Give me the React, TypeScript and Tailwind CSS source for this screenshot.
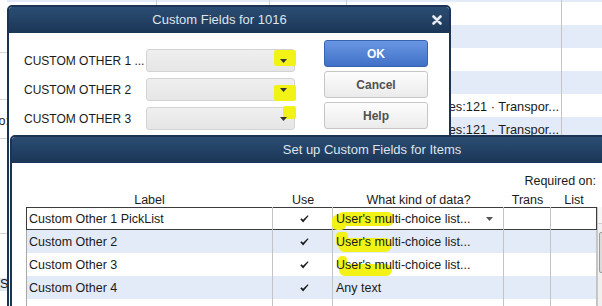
import React from "react";

const HL = "bg-[#f2f216]";

function Tri({ color = "#3a3a3a" }: { color?: string }) {
  return (
    <svg width="7" height="4" viewBox="0 0 7 4" className="relative z-10 block">
      <path d="M0 0H7L3.5 4Z" fill={color} />
    </svg>
  );
}

function Check() {
  return (
    <svg width="9" height="8" viewBox="0 0 9 8" className="block">
      <path d="M0.3 4.2 L1.6 3.2 L3 4.8 L7.8 0.3 L8.5 0.9 L3.1 7.6 Z" fill="#1a1a1a" />
    </svg>
  );
}

function CloseX() {
  return (
    <svg width="10" height="10" viewBox="0 0 10 10" className="block">
      <path d="M1.5 1.5 L8.5 8.5 M8.5 1.5 L1.5 8.5" stroke="#e6ebf1" strokeWidth="2.6" strokeLinecap="round" />
    </svg>
  );
}

const bgRows = [true, false, true, false, true, false, true, false];

function BackgroundList() {
  return (
    <div className="absolute left-0 top-[-21px] w-[602px] flex flex-col">
      {bgRows.map((blue, i) => (
        <div key={i} className={`flex h-[23px] ${blue ? "bg-[#e3ebf8]" : "bg-white"}`}>
          <div className="w-[157px] border-r border-[#cfcfcf]" />
          <div className="w-[113px] border-r border-[#cfcfcf]" />
          <div className="w-[77px] border-r border-[#cfcfcf]" />
          <div className="w-[215px] border-r border-[#c4c4c4] flex items-center justify-end pr-[2px] pt-[2px] text-[12.8px] text-[#1a1a1a] whitespace-nowrap overflow-hidden">
            {i === 5 || i === 6 ? "Expenses:121 · Transpor..." : ""}
          </div>
          <div className="flex-1" />
        </div>
      ))}
    </div>
  );
}

function LeftStrip() {
  return (
    <div className="absolute left-0 top-0 w-[7px] h-[306px] bg-white overflow-hidden text-[12.5px] text-[#1a1a1a]">
      <div className="absolute left-0 top-[52px] w-[7px] h-px bg-[#d4d4d4]" />
      <div className="absolute left-0 top-[99px] w-[7px] h-px bg-[#d4d4d4]" />
      <div className="absolute left-0 top-[138px] w-[7px] h-px bg-[#d4d4d4]" />
      <div className="absolute left-0 top-[233px] w-[7px] h-px bg-[#d4d4d4]" />
      <div className="absolute left-0 top-[278px] w-[7px] h-[13px] bg-[#e2e8f0]" />
      <div className="absolute right-[-2px] top-[114px] leading-[14px] whitespace-nowrap">o:</div>
      <div className="absolute left-0 top-[277px] leading-[14px] whitespace-nowrap">Se</div>
    </div>
  );
}

function Dropdown({ hl }: { hl: string }) {
  return (
    <div className="relative w-[149px] h-[23px] rounded-[3px] border border-[#d3d3d3] bg-gradient-to-b from-[#efefef] to-[#e6e6e6] flex items-center justify-end pr-[7px]">
      <div className={`absolute ${hl} ${HL} rounded-[2px]`} />
      <Tri color="#333" />
    </div>
  );
}

function CustomFieldsDialog() {
  const rows = [
    { label: "CUSTOM OTHER 1 ...", hl: "left-[127px] top-[0px] w-[22px] h-[16px]" },
    { label: "CUSTOM OTHER 2", hl: "left-[127px] top-[6px] w-[22px] h-[16px]" },
    { label: "CUSTOM OTHER 3", hl: "left-[136px] top-[-2px] w-[13px] h-[13px]" },
  ];
  return (
    <div className="absolute left-[7px] top-[5px] w-[444px] h-[330px] rounded-t-[5px] border-2 border-[#1b3453] bg-white overflow-hidden">
      <div className="relative h-[26px] bg-gradient-to-b from-[#2b4d73] to-[#1b3656] flex items-center">
        <div className="flex-1 text-center pr-[19px] text-[13px] leading-[16px] text-[#dde4ec]">Custom Fields for 1016</div>
        <div className="absolute right-[7px] top-[8px]">
          <CloseX />
        </div>
      </div>
      <div className="flex pl-[15px] pt-[7px]">
        <div className="flex flex-col gap-[6px] mt-[9px]">
          {rows.map((r) => (
            <div key={r.label} className="flex items-center h-[23px]">
              <div className="w-[122px] text-[12px] leading-[14px] text-[#1a1a1a] whitespace-nowrap">{r.label}</div>
              <Dropdown hl={r.hl} />
            </div>
          ))}
        </div>
        <div className="ml-[29px] flex flex-col gap-[4px] w-[104px]">
          <div className="h-[27px] rounded-[3px] border border-[#3763b3] bg-gradient-to-b from-[#6a97e2] to-[#4071c8] flex items-center justify-center text-[12px] font-bold text-white">
            OK
          </div>
          <div className="h-[27px] rounded-[3px] border border-[#c6c6c6] bg-gradient-to-b from-[#fdfdfd] to-[#ebebeb] flex items-center justify-center text-[12px] font-bold text-[#505050]">
            Cancel
          </div>
          <div className="h-[27px] rounded-[3px] border border-[#c6c6c6] bg-gradient-to-b from-[#fdfdfd] to-[#ebebeb] flex items-center justify-center text-[12px] font-bold text-[#505050]">
            Help
          </div>
        </div>
      </div>
    </div>
  );
}

type Row = { label: string; use: boolean; data: string; arrow?: boolean; hl?: React.ReactNode };

const tableRows: Row[] = [
  {
    label: "Custom Other 1 PickList",
    use: true,
    data: "User's multi-choice list...",
    arrow: true,
    hl: (
      <>
        <div className={`absolute left-[4px] top-[5px] w-[57px] h-[14px] rounded-[6px] ${HL}`} />
        <div className={`absolute left-[-1px] top-[8px] w-[14px] h-[15px] rounded-[5px] ${HL}`} />
      </>
    ),
  },
  {
    label: "Custom Other 2",
    use: true,
    data: "User's multi-choice list...",
    hl: (
      <>
        <div className={`absolute left-[3px] top-[2px] w-[12px] h-[14px] rounded-[4px] ${HL}`} />
        <div className={`absolute left-[5px] top-[8px] w-[54px] h-[14px] rounded-[7px] ${HL}`} />
      </>
    ),
  },
  {
    label: "Custom Other 3",
    use: true,
    data: "User's multi-choice list...",
    hl: (
      <>
        <div className={`absolute left-[5px] top-[3px] w-[9px] h-[12px] rounded-[4px] ${HL}`} />
        <div className={`absolute left-[6px] top-[11px] w-[53px] h-[12px] rounded-[6px] ${HL}`} />
      </>
    ),
  },
  { label: "Custom Other 4", use: true, data: "Any text" },
  { label: "Custom Other 5", use: false, data: "Any text" },
];

const cols = "grid grid-cols-[247px_60px_171px_47px_46px]";

function SetupDialog() {
  return (
    <div className="absolute left-[10px] top-[135px] w-[724px] h-[200px] rounded-tl-[5px] border-2 border-[#1b3453] bg-white overflow-hidden">
      <div className="h-[26px] bg-gradient-to-b from-[#2b4d73] to-[#1b3656] flex items-center justify-center text-[13px] leading-[16px] text-[#dde4ec]">
        Set up Custom Fields for Items
      </div>
      <div className="pl-[14px] pt-[11px] text-[12.5px] text-[#1a1a1a]">
        <div className="w-[571px] h-[14px] leading-[14px] flex justify-end pr-[1px]">Required on:</div>
        <div className={`${cols} h-[19px] pt-[5px] leading-[14px] text-center`}>
          <div>Label</div>
          <div>Use</div>
          <div>What kind of data?</div>
          <div>Trans</div>
          <div>List</div>
        </div>
        <div className="flex">
          <div className="flex flex-col">
            {tableRows.map((r, i) => (
              <div
                key={r.label}
                className={`${cols} h-[23px] leading-[14px] ${i % 2 === 1 ? "bg-[#e3ebf8]" : "bg-white"} ${
                  i === 0 ? "shadow-[inset_0_0_0_1px_#3c3c3c]" : "shadow-[inset_1px_0_0_0_#a8a8a8]"
                }`}
              >
                <div className="flex items-center pl-[3px] border-r border-[#c4c4c4] whitespace-nowrap">{r.label}</div>
                <div className="flex items-center justify-center border-r border-[#c4c4c4] pl-[3px]">{r.use ? <Check /> : null}</div>
                <div className="relative flex items-center justify-between pl-[3px] pr-[10px] border-r border-[#c4c4c4] whitespace-nowrap">
                  {r.hl}
                  <span className="relative">{r.data}</span>
                  {r.arrow ? <Tri color="#555" /> : null}
                </div>
                <div className="border-r border-[#c4c4c4]" />
                <div className={i === 0 ? "" : "border-r border-[#c4c4c4]"} />
              </div>
            ))}
          </div>
          <div className="relative w-[17px] h-[115px] bg-[#f0f0f0] border-l border-[#c8c8c8]">
            <div className="h-[17px] border-b border-[#d0d0d0] bg-[#f6f6f6]" />
            <div className="absolute left-[1px] top-[25px] w-[14px] h-[41px] rounded-[2px] border border-[#9c9c9c] bg-[#dcdcdc]" />
          </div>
        </div>
      </div>
    </div>
  );
}

export default function App() {
  return (
    <div className="relative w-[602px] h-[306px] overflow-hidden bg-white font-['Liberation_Sans',Arial,sans-serif]">
      <BackgroundList />
      <LeftStrip />
      <CustomFieldsDialog />
      <SetupDialog />
    </div>
  );
}
